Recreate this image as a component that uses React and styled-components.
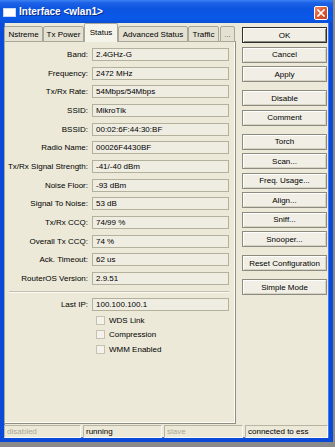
import React from "react";
import styled, { createGlobalStyle } from "styled-components";

const Global = createGlobalStyle`
  html, body { margin: 0; padding: 0; }
  body {
    background: #8a8a8a;
    width: 335px;
    height: 447px;
    overflow: hidden;
    font-family: "Liberation Sans", Arial, sans-serif;
    font-size: 8px;
    color: #000;
  }
`;

const Window = styled.div`
  width: 333px;
  height: 442px;
  display: flex;
  flex-direction: column;
  background: #ece9d8;
`;

const TitleBar = styled.div`
  height: 23px;
  flex: none;
  display: flex;
  align-items: center;
  padding: 0 5px 0 3px;
  gap: 3px;
  background: linear-gradient(to bottom, #3a83f4 0%, #1e63e6 12%, #0a54e0 40%, #0a58e8 80%, #0a4fd6 100%);
`;

const AppIcon = styled.div`
  width: 13px;
  height: 9px;
  background: #fff;
  border: 1px solid #c8d8f8;
  box-sizing: border-box;
  margin-top: 1px;
`;

const Title = styled.div`
  flex: 1;
  color: #fff;
  font-weight: bold;
  font-size: 10px;
  text-shadow: 1px 1px 0 #0a2a8a;
`;

const CloseButton = styled.div`
  width: 14px;
  height: 14px;
  box-sizing: border-box;
  border: 1px solid #fff;
  border-radius: 2px;
  background: linear-gradient(135deg, #f08a6a 0%, #e05a34 45%, #c8401e 100%);
  display: flex;
  align-items: center;
  justify-content: center;
  margin-top: 2px;
`;

const Frame = styled.div`
  flex: 1;
  display: flex;
  flex-direction: column;
  border: 4px solid #0b4ad8;
  border-top: none;
  box-shadow: inset 1px 0 0 #3a7cf2, inset -1px 0 0 #3a7cf2, inset 0 -1px 0 #3a7cf2;
  min-height: 0;
`;

const Main = styled.div`
  flex: 1;
  display: flex;
  min-height: 0;
`;

const LeftColumn = styled.div`
  width: 232px;
  flex: none;
  display: flex;
  flex-direction: column;
`;

const TabRow = styled.div`
  height: 19px;
  flex: none;
  display: flex;
  align-items: flex-end;
  position: relative;
  z-index: 1;
`;

const Tab = styled.div`
  box-sizing: border-box;
  width: ${(p) => p.$w}px;
  height: ${(p) => (p.$active ? 19 : 16)}px;
  margin-left: ${(p) => p.$ml || 0}px;
  display: flex;
  align-items: center;
  justify-content: center;
  white-space: nowrap;
  background: ${(p) => (p.$active ? "#f5f4ea" : "#e4e1d2")};
  border: 1px solid #a9a797;
  border-bottom: ${(p) => (p.$active ? "none" : "1px solid #a9a797")};
  border-radius: 2px 2px 0 0;
  padding-bottom: ${(p) => (p.$active ? 2 : 0)}px;
  color: ${(p) => (p.$muted ? "#6d6b5f" : "#000")};
`;

const Panel = styled.div`
  flex: 1;
  margin-top: -1px;
  box-sizing: border-box;
  border: 1px solid #a9a797;
  border-right-color: #8f8d80;
  border-bottom-color: #8f8d80;
  box-shadow: inset -1px -1px 0 #fdfcf8;
  background: #ece9d8;
  padding: 6px 6px 0 0;
  display: flex;
  flex-direction: column;
`;

const FieldGrid = styled.div`
  display: grid;
  grid-template-columns: 83px 1fr;
  column-gap: 4px;
  row-gap: 5.67px;
`;

const Label = styled.div`
  text-align: right;
  line-height: 13px;
  white-space: nowrap;
`;

const Field = styled.div`
  height: 13px;
  box-sizing: border-box;
  border: 1px solid #b3b09c;
  background: #efede2;
  padding-left: 3px;
  line-height: 11px;
  white-space: nowrap;
`;

const Separator = styled.div`
  margin: 6px 0 5px 4px;
  height: 0;
  border-top: 1px solid #c2bfae;
  border-bottom: 1px solid #fbfaf4;
`;

const CheckList = styled.div`
  margin-left: 89px;
  margin-top: 2px;
  display: flex;
  flex-direction: column;
`;

const CheckRow = styled.div`
  height: 14.5px;
  display: flex;
  align-items: center;
  gap: 4px;
  padding-left: 2px;
`;

const CheckBox = styled.div`
  width: 9px;
  height: 9px;
  box-sizing: border-box;
  border: 1px solid #c4c1b0;
  background: #f4f2ea;
`;

const RightColumn = styled.div`
  flex: 1;
  padding: 4px 2px 0 6px;
  display: flex;
  flex-direction: column;
`;

const ButtonGroup = styled.div`
  display: flex;
  flex-direction: column;
  gap: 3.5px;
  margin-bottom: 8px;
`;

const Button = styled.div`
  height: 16px;
  box-sizing: border-box;
  display: flex;
  align-items: center;
  justify-content: center;
  background: #f1efe5;
  border: 1px solid ${(p) => (p.$default ? "#2e2e2e" : "#8d8b80")};
  box-shadow: ${(p) =>
    p.$default
      ? "inset 1px 1px 0 #fff, inset -1px -1px 0 #8d8b80"
      : "inset 1px 1px 0 #fff, inset -1px -1px 0 #d6d3c4"};
  white-space: nowrap;
`;

const StatusBar = styled.div`
  height: 13px;
  flex: none;
  margin-top: 1px;
  display: grid;
  grid-template-columns: 77px 79px 79px 1fr;
  gap: 2px;
  padding-right: 1px;
`;

const StatusCell = styled.div`
  box-sizing: border-box;
  border-top: 1px solid #b7b4a3;
  border-left: 1px solid #b7b4a3;
  border-right: 1px solid #fbfaf4;
  border-bottom: 1px solid #fbfaf4;
  padding-left: 2px;
  line-height: 11px;
  white-space: nowrap;
  color: ${(p) => (p.$muted ? "#aaa794" : "#000")};
`;

const fields = [
  ["Band:", "2.4GHz-G"],
  ["Frequency:", "2472 MHz"],
  ["Tx/Rx Rate:", "54Mbps/54Mbps"],
  ["SSID:", "MikroTik"],
  ["BSSID:", "00:02:6F:44:30:BF"],
  ["Radio Name:", "00026F4430BF"],
  ["Tx/Rx Signal Strength:", "-41/-40 dBm"],
  ["Noise Floor:", "-93 dBm"],
  ["Signal To Noise:", "53 dB"],
  ["Tx/Rx CCQ:", "74/99 %"],
  ["Overall Tx CCQ:", "74 %"],
  ["Ack. Timeout:", "62 us"],
  ["RouterOS Version:", "2.9.51"],
];

const tabs = [
  { label: "Nstreme", w: 39, ml: 0 },
  { label: "Tx Power", w: 41, ml: 0 },
  { label: "Status", w: 34, active: true },
  { label: "Advanced Status", w: 70 },
  { label: "Traffic", w: 31 },
  { label: "...", w: 15, ml: 1, muted: true },
];

const buttonGroups = [
  [{ t: "OK", d: true }, { t: "Cancel" }, { t: "Apply" }],
  [{ t: "Disable" }, { t: "Comment" }],
  [
    { t: "Torch" },
    { t: "Scan..." },
    { t: "Freq. Usage..." },
    { t: "Align..." },
    { t: "Sniff..." },
    { t: "Snooper..." },
  ],
  [{ t: "Reset Configuration" }],
  [{ t: "Simple Mode" }],
];

export default function App() {
  return (
    <>
      <Global />
      <Window>
        <TitleBar>
          <AppIcon />
          <Title>Interface &lt;wlan1&gt;</Title>
          <CloseButton>
            <svg width="8" height="8" viewBox="0 0 8 8">
              <path d="M1 1 L7 7 M7 1 L1 7" stroke="#fff" strokeWidth="1.6" strokeLinecap="square" />
            </svg>
          </CloseButton>
        </TitleBar>
        <Frame>
          <Main>
            <LeftColumn>
              <TabRow>
                {tabs.map((t) => (
                  <Tab key={t.label} $w={t.w} $ml={t.ml} $active={t.active} $muted={t.muted}>
                    {t.label}
                  </Tab>
                ))}
              </TabRow>
              <Panel>
                <FieldGrid>
                  {fields.map(([l, v]) => (
                    <React.Fragment key={l}>
                      <Label>{l}</Label>
                      <Field>{v}</Field>
                    </React.Fragment>
                  ))}
                </FieldGrid>
                <Separator />
                <FieldGrid>
                  <Label>Last IP:</Label>
                  <Field>100.100.100.1</Field>
                </FieldGrid>
                <CheckList>
                  {["WDS Link", "Compression", "WMM Enabled"].map((c) => (
                    <CheckRow key={c}>
                      <CheckBox />
                      <span>{c}</span>
                    </CheckRow>
                  ))}
                </CheckList>
              </Panel>
            </LeftColumn>
            <RightColumn>
              {buttonGroups.map((g, i) => (
                <ButtonGroup key={i}>
                  {g.map((b) => (
                    <Button key={b.t} $default={b.d}>
                      {b.t}
                    </Button>
                  ))}
                </ButtonGroup>
              ))}
            </RightColumn>
          </Main>
          <StatusBar>
            <StatusCell $muted>disabled</StatusCell>
            <StatusCell>running</StatusCell>
            <StatusCell $muted>slave</StatusCell>
            <StatusCell>connected to ess</StatusCell>
          </StatusBar>
        </Frame>
      </Window>
    </>
  );
}
